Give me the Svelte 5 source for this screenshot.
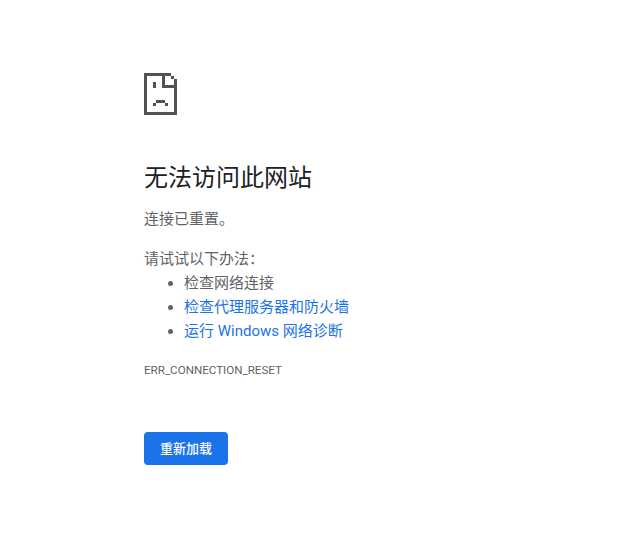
<script>
  // cells of the sad page icon, 11 x 14 at 3px each
  const rows = [
    "#########..",
    "#.....#..#.",
    "#.....#...#",
    "#..#..#...#",
    "#..#..#####",
    "#.........#",
    "#.........#",
    "#.........#",
    "#.........#",
    "#...###...#",
    "#..#...#..#",
    "#.........#",
    "#.........#",
    "###########",
  ];
  const iconPath = rows
    .flatMap((row, y) =>
      [...row].map((c, x) => (c === "#" ? `M${x} ${y}h1v1h-1z` : "")),
    )
    .join("");

  const tips = [
    { label: "检查网络连接" },
    { label: "检查代理服务器和防火墙", link: true },
    { label: "运行 Windows 网络诊断", link: true },
  ];
</script>

<main>
  <svg class="icon" width="33" height="42" viewBox="0 0 11 14" shape-rendering="crispEdges">
    <path d={iconPath} fill="#525252" />
  </svg>

  <h1>无法访问此网站</h1>
  <p class="reason">连接已重置。</p>

  <p class="try">请试试以下办法：</p>
  <ul>
    {#each tips as tip}
      <li><span class:link={tip.link}>{tip.label}</span></li>
    {/each}
  </ul>

  <div class="code">ERR_CONNECTION_RESET</div>

  <button>重新加载</button>
</main>

<style>
  :global(body) {
    margin: 0;
    background: #fff;
  }
  main {
    box-sizing: border-box;
    width: 628px;
    height: 546px;
    padding: 73px 0 0 144px;
    color: #5f6368;
    font-family: Roboto, "Noto Sans CJK SC", sans-serif;
    font-size: 15px;
    line-height: 24px;
  }
  .icon {
    display: block;
  }
  h1 {
    margin: 47px 0 0;
    color: #202124;
    font-size: 24px;
    font-weight: 400;
    line-height: 32px;
  }
  .reason {
    margin: 13px 0 0;
  }
  .try {
    margin: 16px 0 0;
  }
  ul {
    margin: 0;
    padding: 0 0 0 40px;
  }
  .link {
    color: #1a73e8;
  }
  .code {
    margin-top: 19px;
    font-size: 11.6px;
    line-height: 16px;
  }
  button {
    display: block;
    width: 84px;
    height: 33px;
    margin-top: 54px;
    padding: 0;
    border: none;
    border-radius: 4px;
    background: #1a73e8;
    color: #fff;
    font: inherit;
    font-size: 13px;
    font-weight: 500;
  }
</style>
